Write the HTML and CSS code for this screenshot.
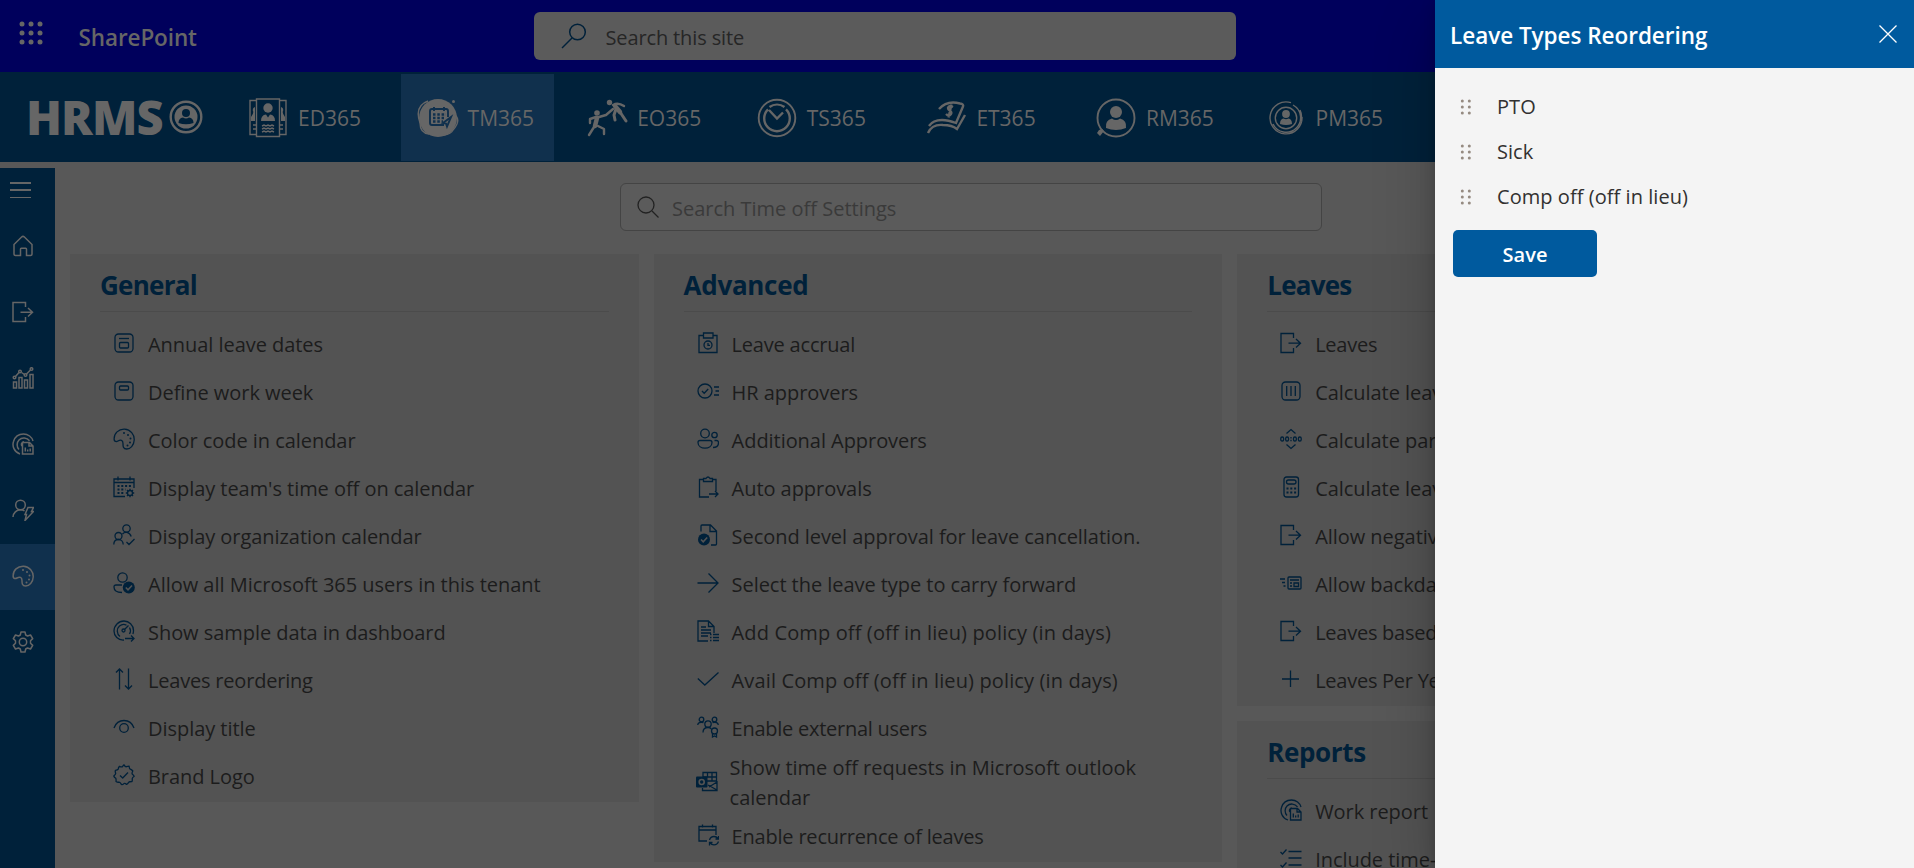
FILE: index.html
```html
<!DOCTYPE html>
<html lang="en">
<head>
<meta charset="utf-8">
<title>Leave Types Reordering</title>
<link rel="stylesheet" href="styles.css">
</head>
<body>
<svg class="sprite" aria-hidden="true">
  <symbol id="exit" viewBox="0 0 22 22"><path d="M13.500 6V1.500H1v19h12.500V16M8.500 11.200H20M16 7l4.500 4.200L16 15.500"/></symbol>
  <symbol id="palette" viewBox="0 0 22 22"><path d="M1.200 12C.5 5 6 1 11.500 1.200 17.500 1.500 21.500 6.500 21.200 12c-.2 5.500-4 9-7.500 9-4 0-3.700-3.500-3.700-5.500 0-3.500-2.500-4-5-2.500-1.700 1-3.500.5-3.800-1z"/><g class="solid"><circle cx="11" cy="5" r="1"/><circle cx="15" cy="7" r="1"/><circle cx="17.500" cy="10.500" r="1"/><circle cx="17" cy="14.500" r="1"/><circle cx="14.500" cy="17.500" r="1"/></g></symbol>
  <symbol id="report" viewBox="0 0 22 22"><path d="M8 21C2 19 0 13 1.500 8.500 3 3.500 7 1 11.500 1c4.500 0 8.500 3 9.500 7M7 16.500C4.500 14 4.500 9.500 7 7c3-3 8-2.500 10.500.8M10 13c-1.300-2 0-4 2-4.200M10.500 9.500h7l3.500 3.500v8H10.500zM17 9.500V13h4M13.300 18.500v-4M15.700 18.500v-2M18.200 18.500v-3"/></symbol>
  <symbol id="home" viewBox="0 0 22 22"><path d="M2 9.500 9.600 2q1.400-1.300 2.800 0L20 9.500v9.500q0 1.500-1.500 1.500h-4V14q0-.8-.8-.8H9.300q-.8 0-.8.8v6.500h-5Q2 20.500 2 19z"/></symbol>
  <symbol id="chart" viewBox="0 0 22 22"><path d="M1.500 21v-6h3v6zM7 21V10.500h3V21zM12.500 21v-8h3v8zM18 21V7.500h3V21zM3.500 9.500 7 5.500M9.500 5.500l3 2M14.500 7l4-4"/><circle cx="2.500" cy="10.500" r="1.300"/><circle cx="8" cy="4.500" r="1.300"/><circle cx="13.500" cy="8" r="1.300"/><circle cx="19.500" cy="2" r="1.300"/></symbol>
  <symbol id="user-bolt" viewBox="0 0 22 22"><circle cx="8.500" cy="6" r="4.800"/><path d="M1 18c.2-4 3.500-7.200 7.500-7.200 1.500 0 3 .4 4 1.200M16 8.500h5.500l-2 4h2L13 21.500l1.500-6H13z"/></symbol>
  <symbol id="gear" viewBox="0 0 22 22"><circle cx="11" cy="11" r="3.700"/><path stroke-linejoin="round" d="m9 1h4l.7 3 1.800 1 3-1 2.200 3.600-2.200 2.200v2.400l2.200 2.200-2.200 3.600-3-1-1.800 1-.7 3H9l-.7-3-1.800-1-3 1-2.200-3.600 2.200-2.200V9.800L1.300 7.600 3.500 4l3 1 1.800-1z"/></symbol>
  <symbol id="annual" viewBox="0 0 22 22"><rect x="2" y="2" width="18" height="18" rx="3.500"/><rect x="6.500" y="10.500" width="9" height="5.500" rx="1"/><path d="M6 6.500h10"/></symbol>
  <symbol id="week" viewBox="0 0 22 22"><rect x="2" y="2" width="18" height="18" rx="3.500"/><rect x="6.500" y="6" width="9" height="4" rx="1"/></symbol>
  <symbol id="cal-gear" viewBox="0 0 22 22"><path d="M12 20.500H1V3h20v9M1 6.500h20M5 .5v4M17 .5v4"/><path class="dots" d="M4.500 10h14M4.500 13.500h8M4.500 17h6"/><circle cx="17" cy="17" r="2.500"/><path d="M17 12.800v1.700M17 19.500v1.700M12.800 17h1.700M19.500 17h1.700M14 14l1.200 1.200M18.800 18.800 20 20M20 14l-1.200 1.200M14 20l1.200-1.200"/></symbol>
  <symbol id="org" viewBox="0 0 22 22"><circle cx="13.500" cy="4.500" r="3.700"/><circle cx="5.500" cy="12" r="3.500"/><path d="M.8 20.500c0-3 2-5 4.700-5s4.700 2 4.700 5M9.500 10c2-2.500 7-2.500 8.700 2.500M13.500 18l2.500 2.500 5.500-5.500"/></symbol>
  <symbol id="user-check" viewBox="0 0 22 22"><circle cx="9.500" cy="5.500" r="4.700"/><path d="M9 13H3q-2 0-2 2 0 5.500 8 5.500"/><circle class="solid" cx="15.800" cy="15.500" r="6"/><path class="knock" d="m12.800 15.500 2.200 2.300 4-4.300"/></symbol>
  <symbol id="gauge" viewBox="0 0 22 22"><path d="M11 20C5 20.500 1 16 1 11 1 5.500 5.500 1 11 1c5 0 9.500 4 9.500 9.500 0 1.500-.2 2.500-.6 3.500M7 16.500C3.500 14 3.500 8.500 6.500 6c2-1.700 5-2 7-.8M16.500 7.500c1.200 2 1.200 4.500 0 6.500M11.500 9.500 15.500 5.500M12 18.500h9M18 15.500l3 3-3 3"/><circle cx="10.500" cy="10.500" r="1.500"/></symbol>
  <symbol id="reorder" viewBox="0 0 22 22"><path d="M6.500 21.500V1M3 4.500 6.500 1 10 4.500M15.500.5V21M12 17.500l3.500 3.500 3.500-3.500"/></symbol>
  <symbol id="eye" viewBox="0 0 22 22"><path d="M1 12C4.500 2 17.500 2 21 12"/><circle cx="11" cy="12" r="4.300"/></symbol>
  <symbol id="badge" viewBox="0 0 22 22"><path stroke-linejoin="round" d="M11 .8Q12.300 3 13.500 2.700 14.700 2.300 16.100 2.200 16.300 4.700 17.300 5.200 18.800 5.800 19.800 7 18.700 9 19.200 10 20.500 11 21.200 12.300 19.300 13.500 19.200 14.800 19.500 16 19 17.500 16.500 17.400 15.700 18.300 15 19.700 13.600 20.400 12 19 11 19.500 10 21 8.400 20.400 7.200 18.200 6.200 18.200 4.500 18.500 3 17.500 3.300 15.200 2.700 14.200 1.200 13.300.8 12 2.700 10.300 2.700 9.300 2 7.800 2.400 6.300 4.700 6 5.200 5.200 5.300 3.500 6.500 2.300 8.600 3.200 9.500 2.700 10 1.400 11 .8zM7 11.500l2.700 2.500 5.300-5.500"/></symbol>
  <symbol id="accrual" viewBox="0 0 22 22"><path d="M6 3.500H2v17h18v-17h-4M6.500 1h9.500v5H6.500z"/><circle cx="11" cy="13" r="4"/><path d="M11 11v2.300h2"/></symbol>
  <symbol id="hr-check" viewBox="0 0 22 22"><circle cx="8" cy="11" r="7"/><path d="m5 11 2.200 2.300 4-4.300M17 7h5M18.500 11H22M17 15h5"/></symbol>
  <symbol id="people" viewBox="0 0 22 22"><circle cx="8" cy="5.500" r="4.300"/><circle cx="17.500" cy="7" r="2.700"/><path d="M3 12.500h10q2 0 2 2c0 7.500-14 7.500-14 0q0-2 2-2zM17.500 12.500h2q2 0 2 2 0 5-5.500 5"/></symbol>
  <symbol id="clip" viewBox="0 0 22 22"><path d="M6.500 3.500h-4v17.500h9.500M15 3.500h4v11.500M6.500 2.500h2.500q2-3 4 0h2.500v3h-9zM12 18h9M18 15l3 3-3 3"/></symbol>
  <symbol id="doc-check" viewBox="0 0 22 22"><path d="M4 7.500V2q0-1 1-1h8.500l6 6v13q0 1-1 1H14M13 1v6.500h6.500"/><circle class="solid" cx="7" cy="15.500" r="6"/><path class="knock" d="m4 15.500 2.200 2.300 4-4.300"/></symbol>
  <symbol id="right" viewBox="0 0 22 22"><path d="M.5 11H21M11.500 1.500 21 11l-9.500 9.500"/></symbol>
  <symbol id="doc-list" viewBox="0 0 22 22"><path d="M11 21H1V1h10.500L17 6.500V13M11.500 1v5.500H17M4 7h5M4 10h10M4 13h10M4 16h7M13 14.500h1.500M16 14.500h6M13 17.500h1.500M16 17.500h6M13 20.500h1.500M16 20.500h6"/></symbol>
  <symbol id="tick" viewBox="0 0 22 22"><path d="m.8 10.500 7 6.500L21.500 4.500"/></symbol>
  <symbol id="external" viewBox="0 0 22 22"><circle cx="4.500" cy="3.500" r="2.300"/><circle cx="17.500" cy="3.500" r="2.300"/><circle cx="11" cy="8" r="3.200"/><circle cx="17.500" cy="15" r="3"/><path d="M.7 9C1 6.500 3 5.800 6.500 6.500M21.300 9c-.3-2.500-2.300-3.200-5.800-2.500M6 16.500c0-3 2-5 5-5 1.500 0 2.500.4 3.300 1.200M15.500 17.500v3.500l2-1 2 1v-3.500"/></symbol>
  <symbol id="outlook" viewBox="0 0 22 22"><path d="M7 6V1.500h13.500V10M11.500 1.500V6M16 1.500v9M7 6h13.500M11 10h9.500M21 10v9.500H6.500V17M12 14l9 5M21 11l-8 5"/><rect class="solid" x="0" y="5.500" width="11.500" height="11" rx="1"/><circle class="knock" cx="5.700" cy="11" r="2.500"/></symbol>
  <symbol id="recur" viewBox="0 0 22 22"><path d="M10 17H2V2.500h17V11M2 6h17M5.500.5v3M15.500.5v3M12.500 16q1-3.500 4.500-3.500 2.500 0 4 2M21.500 12v3h-3M21.500 17.500q-1 3.300-4.500 3.300-2.500 0-3.800-1.800M12.500 21.500v-3h3"/></symbol>
  <symbol id="bars" viewBox="0 0 22 22"><rect x="2" y="2" width="18" height="18" rx="3.500"/><path d="M6.700 6v10M11 6v10M15.300 6v10"/></symbol>
  <symbol id="time" viewBox="0 0 22 22"><path d="m6.500 5.500 4.500-4 4.500 4M6.500 16.500l4.500 4 4.500-4"/><rect x=".8" y="9" width="2.800" height="4" rx="1.300"/><rect x="5.700" y="9" width="2.800" height="4" rx="1.300"/><rect x="13.500" y="9" width="2.800" height="4" rx="1.300"/><rect x="18.400" y="9" width="2.800" height="4" rx="1.300"/><path d="M11 9v1.500M11 11.700v1.500"/></symbol>
  <symbol id="calc" viewBox="0 0 22 22"><rect x="4" y="1" width="14.500" height="20" rx="2.500"/><rect x="6.500" y="4" width="9.500" height="4" rx="2"/><path class="dots" d="M6.500 12.500h10M6.500 16.500h10"/></symbol>
  <symbol id="backdate" viewBox="0 0 22 22"><rect x="8" y="5" width="13" height="12" rx="1"/><path d="M0 7h5M2 10.500h3M3.500 14h2M10 8h9M10 11h2M10 14h2M14 11h4.500v3.500H14z"/></symbol>
  <symbol id="plus" viewBox="0 0 22 22"><path d="M2 11h17M10.500 2.500V19"/></symbol>
  <symbol id="list" viewBox="0 0 22 22"><path d="M8.500 4.500H21.500M8.500 11H21.500M8.500 18H21.500M.5 5l2 2 4-4.500M.5 18l2 2 4-4.500"/></symbol>
</svg>

<div class="page">
  <header class="suite">
    <svg class="waffle" viewBox="0 0 24 24"><circle cx="3" cy="3" r="2.500"/><circle cx="12" cy="3" r="2.500"/><circle cx="21" cy="3" r="2.500"/><circle cx="3" cy="12" r="2.500"/><circle cx="12" cy="12" r="2.500"/><circle cx="21" cy="12" r="2.500"/><circle cx="3" cy="21" r="2.500"/><circle cx="12" cy="21" r="2.500"/><circle cx="21" cy="21" r="2.500"/></svg>
    <div class="suite-name"><span>SharePoint</span></div>
    <div class="suite-search"><svg viewBox="0 0 26 26"><circle cx="16.500" cy="9" r="7.800"/><path d="M11 15 1 25"/></svg><span>Search this site</span></div>
  </header>

  <nav class="modules">
    <div class="logo"><span>HRMS</span><svg viewBox="0 0 34 34"><circle class="line" cx="17" cy="17" r="15.300"/><circle cx="17" cy="17" r="11.500"/><g class="cut"><circle cx="17" cy="13" r="4"/><path d="M9.500 23q0-5 4.500-5.500 3 2 6 0 4.500.5 4.500 5.500-7.500 2.500-15 0z"/></g></svg></div>
    <div class="module"><svg viewBox="0 0 42 42"><path class="line thin" d="M9 3.500H3v34h6M33 3.500h6v34h-6M9.500 2h23v37.500h-23z"/><circle cx="21" cy="11" r="4.700"/><path d="M14 24q0-6 5-6.500l2 3 2-3q5 .5 5 6.500z"/><path d="M8 10q-3 1-2 4 1 2-2 6v4h4zM34 10q3 1 2 4-1 2 2 6v4h-4z"/><path class="line thin" d="m15 29 2-1 2 1 2-1 2 1 2-1 2 1M15 32l2-1 2 1 2-1 2 1 2-1 2 1M15 35l2-1 2 1 2-1 2 1 2-1 2 1M6 28h3M6 32h3M33 28h3M33 32h3"/></svg><span>ED365</span></div>
    <div class="module active"><svg viewBox="0 0 42 42"><circle cx="21" cy="21" r="19"/><circle cx="36.500" cy="4.500" r="1.500"/><path class="line thin" d="M11 4Q-3 9 3 26q0 10 9 11M37 17q8 6-1 16-2 4-9 5"/><g class="cut line"><path d="M31 20v-6q0-2-2-2H15q-2 0-2 2v12q0 2 2 2h12M17 10v4M27 10v4M34 20l-8 6 3 .5 1 3z"/><path class="cells" d="M16 17.500h13M16 21h11M16 24.500h10"/></g></svg><span>TM365</span></div>
    <div class="module"><svg viewBox="0 0 42 42"><circle cx="11" cy="16" r="2.800"/><circle cx="23.500" cy="5.500" r="2.700"/><g class="line joint"><path class="w2" d="M4 26v-4l6-2M13 20l7-2 7-6M27 8q5-3 11 1M3 38l5-8M12 29l6 3v5"/><path class="w4" d="m11 21-2 8M29 9l5 6"/><path class="w3" d="m34 15 6 9M30 12l-2 6 1 5"/></g></svg><span>EO365</span></div>
    <div class="module"><svg viewBox="0 0 42 42"><circle class="line" cx="21" cy="21" r="18.300"/><path class="line w2" d="M12 12.300a12.800 12.800 0 1 0 18 0M13.500 10a13 13 0 0 1 15 0M13 13l8 8.500 6-6"/></svg><span>TS365</span></div>
    <div class="module"><svg viewBox="-2 0 42 42"><path class="line w2" d="M12 12Q20 3 33 6.500q4 .5 3 3L29 26q-8-3-14-3-9 0-13 6M1 36q4-9 15-8 9 0 14 4l8-14"/><path class="line w2" d="M26 10q-4-2-5 1 0 2 2 3 2 1 1 3-2 3-5 0M24.500 7.500l-3 13"/></svg><span>ET365</span></div>
    <div class="module"><svg viewBox="0 0 42 42"><circle class="line" cx="21" cy="21" r="18.500"/><circle cx="21" cy="15" r="6"/><path d="M11 31q-1-8 6-9.500 4 3 8 0 7 1.500 6 9.500-10 4-20 0zM2 36l2-3 3-1 2 2-4 5z"/></svg><span>RM365</span></div>
    <div class="module"><svg viewBox="0 0 42 42"><path class="line thin" d="M26 5.700A16 16 0 1 0 37 20M28 8a14.500 14.500 0 1 1-20 19M35 13q2.500 5 1 11"/><circle class="line thin" cx="21" cy="21" r="10.700"/><circle cx="21" cy="17" r="3.900"/><path d="M15 27q0-5 3.500-5.500 2.500 1.500 5 0 3.500.5 3.500 5.500-6 2-12 0z"/></svg><span>PM365</span></div>
  </nav>

  <div class="body">
    <aside class="rail">
      <div class="burger"><i></i><i></i><i></i></div>
      <div class="rail-item"><svg class="icon"><use href="#home"/></svg></div>
      <div class="rail-item"><svg class="icon"><use href="#exit"/></svg></div>
      <div class="rail-item"><svg class="icon"><use href="#chart"/></svg></div>
      <div class="rail-item"><svg class="icon"><use href="#report"/></svg></div>
      <div class="rail-item"><svg class="icon"><use href="#user-bolt"/></svg></div>
      <div class="rail-item active"><svg class="icon"><use href="#palette"/></svg></div>
      <div class="rail-item"><svg class="icon"><use href="#gear"/></svg></div>
    </aside>
    <main class="content">
      <div class="settings-search"><svg viewBox="0 0 22 22"><circle cx="9" cy="9" r="8"/><path d="m15 15 6.500 6.500"/></svg><span>Search Time off Settings</span></div>
      <div class="columns">
        <section class="card">
          <h2 class="tight">General</h2>
          <ul>
            <li><svg class="icon"><use href="#annual"/></svg><span>Annual leave dates</span></li>
            <li><svg class="icon"><use href="#week"/></svg><span>Define work week</span></li>
            <li><svg class="icon"><use href="#palette"/></svg><span>Color code in calendar</span></li>
            <li><svg class="icon"><use href="#cal-gear"/></svg><span>Display team's time off on calendar</span></li>
            <li><svg class="icon"><use href="#org"/></svg><span>Display organization calendar</span></li>
            <li><svg class="icon"><use href="#user-check"/></svg><span class="even">Allow all Microsoft 365 users in this tenant</span></li>
            <li><svg class="icon"><use href="#gauge"/></svg><span>Show sample data in dashboard</span></li>
            <li><svg class="icon"><use href="#reorder"/></svg><span class="narrow">Leaves reordering</span></li>
            <li><svg class="icon"><use href="#eye"/></svg><span>Display title</span></li>
            <li><svg class="icon"><use href="#badge"/></svg><span>Brand Logo</span></li>
          </ul>
        </section>
        <section class="card">
          <h2>Advanced</h2>
          <ul>
            <li><svg class="icon"><use href="#accrual"/></svg><span class="narrow">Leave accrual</span></li>
            <li><svg class="icon"><use href="#hr-check"/></svg><span>HR approvers</span></li>
            <li><svg class="icon"><use href="#people"/></svg><span>Additional Approvers</span></li>
            <li><svg class="icon"><use href="#clip"/></svg><span>Auto approvals</span></li>
            <li><svg class="icon"><use href="#doc-check"/></svg><span>Second level approval for leave cancellation.</span></li>
            <li><svg class="icon"><use href="#right"/></svg><span>Select the leave type to carry forward</span></li>
            <li><svg class="icon"><use href="#doc-list"/></svg><span class="wide">Add Comp off (off in lieu) policy (in days)</span></li>
            <li><svg class="icon"><use href="#tick"/></svg><span class="wide">Avail Comp off (off in lieu) policy (in days)</span></li>
            <li><svg class="icon"><use href="#external"/></svg><span class="narrower">Enable external users</span></li>
            <li class="tall"><svg class="icon"><use href="#outlook"/></svg><span class="even">Show time off requests in Microsoft outlook<br>calendar</span></li>
            <li><svg class="icon"><use href="#recur"/></svg><span class="narrow">Enable recurrence of leaves</span></li>
          </ul>
        </section>
        <div class="stack">
          <section class="card">
            <h2 class="tight">Leaves</h2>
            <ul>
              <li><svg class="icon"><use href="#exit"/></svg><span class="narrower">Leaves</span></li>
              <li><svg class="icon"><use href="#bars"/></svg><span>Calculate leave</span></li>
              <li><svg class="icon"><use href="#time"/></svg><span>Calculate partial</span></li>
              <li><svg class="icon"><use href="#calc"/></svg><span>Calculate leave</span></li>
              <li><svg class="icon"><use href="#exit"/></svg><span>Allow negative</span></li>
              <li><svg class="icon"><use href="#backdate"/></svg><span>Allow backdated</span></li>
              <li><svg class="icon"><use href="#exit"/></svg><span class="narrower">Leaves based</span></li>
              <li><svg class="icon"><use href="#plus"/></svg><span class="narrower">Leaves Per Year</span></li>
            </ul>
          </section>
          <section class="card">
            <h2 class="snug">Reports</h2>
            <ul>
              <li><svg class="icon"><use href="#report"/></svg><span>Work report</span></li>
              <li><svg class="icon"><use href="#list"/></svg><span>Include time-off</span></li>
            </ul>
          </section>
        </div>
      </div>
    </main>
  </div>
</div>

<aside class="panel">
  <header class="panel-head"><h1><span>Leave Types Reordering</span></h1><svg viewBox="0 0 18 18"><path d="m.5.5 17 17M17.500.5l-17 17"/></svg></header>
  <ul class="order">
    <li><svg viewBox="0 0 12 16"><use href="#grip"/></svg><span>PTO</span></li>
    <li><svg viewBox="0 0 12 16"><use href="#grip"/></svg><span>Sick</span></li>
    <li><svg viewBox="0 0 12 16"><use href="#grip"/></svg><span>Comp off (off in lieu)</span></li>
  </ul>
  <button class="save"><span>Save</span></button>
</aside>
<svg class="sprite" aria-hidden="true"><defs><g id="grip"><circle cx="2.300" cy="2" r="1.500"/><circle cx="9.300" cy="2" r="1.500"/><circle cx="2.300" cy="8" r="1.500"/><circle cx="9.300" cy="8" r="1.500"/><circle cx="2.300" cy="14" r="1.500"/><circle cx="9.300" cy="14" r="1.500"/></g></defs></svg>
</body>
</html>
```
FILE: styles.css
```css
* { box-sizing: border-box; }
html, body { margin: 0; height: 868px; overflow: hidden; }
body { font-family: "Open Sans", "Noto Sans", sans-serif; background: #585858; font-size: 20px; color: #1c1c1c; }
ul, h1, h2 { margin: 0; padding: 0; list-style: none; }
svg { flex: none; }
.sprite { position: absolute; width: 0; height: 0; }
span { white-space: nowrap; }
.page { width: 1914px; height: 868px; overflow: hidden; display: flex; flex-direction: column; }

.suite { flex: none; height: 72px; background: #00005c; display: flex; align-items: flex-start; padding-left: 18.500px; }
.waffle { width: 24px; height: 24px; margin-top: 21px; fill: #666; }
.suite-name { width: 455px; margin-left: 36px; margin-top: 2px; line-height: 72px; font-size: 22.500px; font-weight: 600; letter-spacing: -.1px; color: #666; }
.suite-search { width: 702px; height: 48px; margin-top: 12px; border-radius: 6px; background: #5b5b5b; display: flex; align-items: center; gap: 19px; padding-left: 27px; color: #262626; letter-spacing: -.13px; }
.suite-search span { padding-top: 2px; }
.suite-search svg { width: 26px; height: 26px; fill: none; stroke: #00213a; stroke-width: 1.500; }

.modules { flex: none; height: 90px; background: #00213a; display: flex; align-items: center; padding-left: 26px; color: #666; }
.logo { width: 205px; display: flex; align-items: center; gap: 6px; }
.logo span { width: 137px; font-size: 47px; font-weight: 800; line-height: 58px; letter-spacing: -.9px; }
.logo svg { width: 34px; height: 34px; }
.logo .line { stroke-width: 2.400; }
.logo svg, .module svg { fill: #666; }
.line { fill: none; stroke: #666; stroke-width: 1.900; }
.thin { stroke-width: 1.400; }
.joint { stroke-linecap: round; stroke-linejoin: round; }
.w2 { stroke-width: 2.400; }
.w3 { stroke-width: 3; }
.w4 { stroke-width: 4.500; }
.cut { fill: #00213a; }
.cut.line { fill: none; stroke: #10304d; }
.cells { stroke-width: 2.500; stroke-dasharray: 2.500 1.800; }
.module { width: 153px; height: 87px; margin: 1px 16.600px 0 0; display: flex; align-items: center; gap: 9px; padding-left: 16px; font-size: 21px; }
.module span { padding-top: 1px; }
.module svg { width: 42px; height: 42px; }
.active { background: #10304d; }

.body { flex: 1; min-height: 0; display: flex; align-items: flex-start; }
.rail { display: flow-root; width: 55px; height: 700px; margin-top: 6px; background: #00213a; }
.burger { width: 21px; height: 16px; margin: 14px 0 16px 10px; display: flex; flex-direction: column; justify-content: space-between; }
.burger i { height: 1.500px; background: #666; }
.rail-item { height: 66px; padding: 21px 0 0 12px; }
.icon { width: 22px; height: 22px; display: block; fill: none; color: #00213a; stroke: currentColor; stroke-width: 1.300; }
.rail .icon { color: #666; stroke-width: 1.500; }
.solid { fill: currentColor; stroke: none; }
.dots { stroke-dasharray: 2 1.800; stroke-width: 1.800; }
.knock { fill: none; stroke: #535353; stroke-width: 1.600; }

.content { padding: 21px 0 0 15px; }
.settings-search { width: 702px; height: 48px; margin-left: 550px; border: 1px solid #444; border-radius: 6px; background: #5b5b5b; display: flex; align-items: center; gap: 13px; padding-left: 16px; color: #3a3a3a; }
.settings-search span { padding-top: 2px; }
.settings-search svg { width: 22px; height: 22px; fill: none; stroke: #222; stroke-width: 1.300; }
.columns { margin-top: 23px; display: grid; grid-template-columns: repeat(3, 568.600px); column-gap: 15px; align-items: start; }
.stack { display: grid; gap: 15px; }
.card { background: #535353; padding: 0 30px 1px; }
.card h2 { height: 58px; border-bottom: 1px solid #4b4b4b; line-height: 63px; font-size: 26px; font-weight: 700; letter-spacing: -.3px; color: #00213a; }
.card h2.tight { letter-spacing: -.75px; }
.card h2.snug { letter-spacing: -.35px; }
.card ul { padding: 9px 0 0 13px; }
.card li { height: 48px; display: flex; align-items: center; gap: 13px; line-height: 30px; letter-spacing: -.05px; }
.card li .icon { margin-top: -5px; }
.card li.tall { height: 60px; gap: 11px; }
.card li.tall .icon { margin: -3px 1px 0 -1px; }
.card .narrow { letter-spacing: -.2px; }
.card .narrower { letter-spacing: -.26px; }
.card .even { letter-spacing: -.02px; }
.card .wide { letter-spacing: .13px; }

.panel { position: absolute; top: 0; right: 0; width: 479px; height: 868px; background: #f4f4f4; color: #323130; box-shadow: 0 25px 58px rgba(0,0,0,.22), 0 5px 14px rgba(0,0,0,.18); }
.panel-head { height: 68px; background: #005a9e; display: flex; align-items: center; justify-content: space-between; padding: 2px 17px 0 15px; color: #fff; }
.panel-head h1 { font-size: 22.500px; font-weight: 600; letter-spacing: -.03px; }
.panel-head svg { width: 18px; height: 18px; margin-top: -3px; fill: none; stroke: #fff; stroke-width: 1.300; }
.order { padding: 16px 0 0 25px; }
.order li { height: 45px; display: flex; align-items: center; gap: 25px; letter-spacing: .05px; }
.order svg { width: 12px; height: 16px; margin-top: 1px; fill: #958a80; }
.save { display: block; width: 144px; height: 47px; margin: 11px 0 0 18px; padding-top: 2px; border: 0; border-radius: 5px; background: #005a9e; color: #fff; font: 600 20px "Open Sans", sans-serif; }
```
